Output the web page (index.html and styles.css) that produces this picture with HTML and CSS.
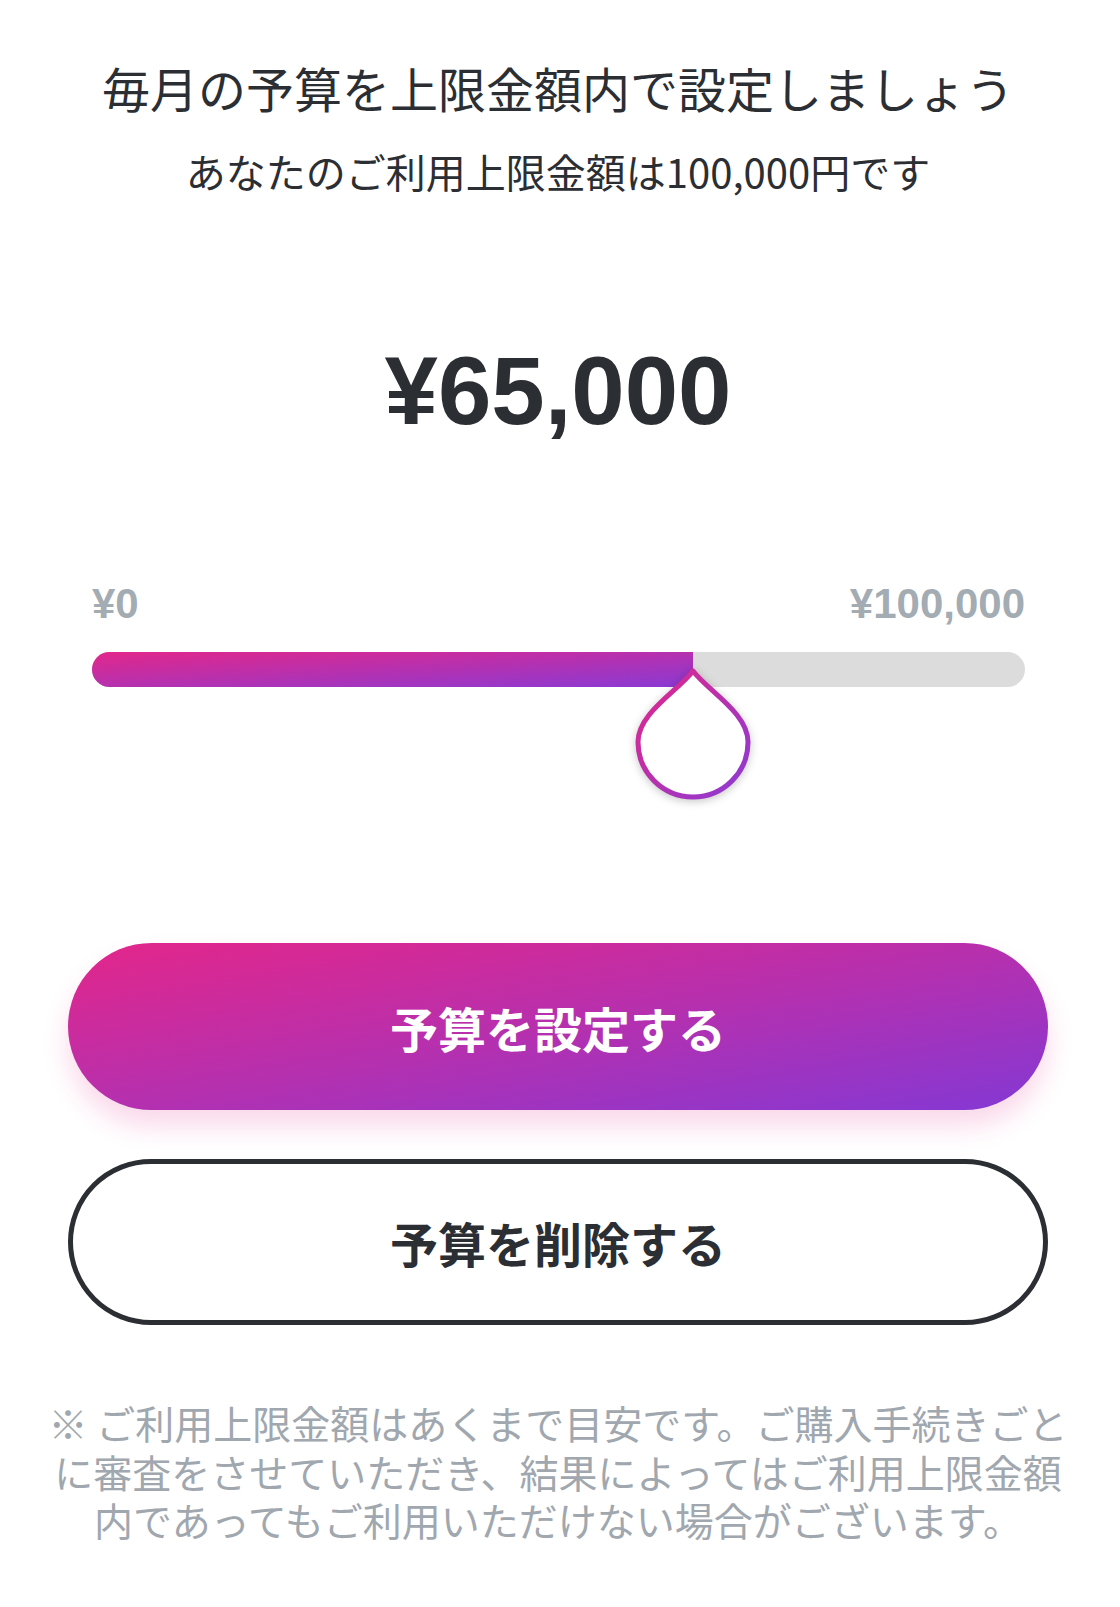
FILE: index.html
```html
<!DOCTYPE html>
<html lang="ja">
<head>
    <meta charset="UTF-8">
    <meta name="viewport" content="width=device-width, initial-scale=1.0">
    <title>予算設定</title>
    <link rel="stylesheet" href="styles.css">
</head>
<body>
    <div class="page">
        <h1 class="title">毎月の予算を上限金額内で設定しましょう</h1>
        <p class="subtitle">あなたのご利用上限金額は100,000円です</p>

        <div class="amount">¥65,000</div>

        <div class="range-labels">
            <span>¥0</span>
            <span>¥100,000</span>
        </div>

        <div class="slider">
            <div class="slider-fill" style="width: 64.4%;"></div>
            <!-- drop-shaped handle -->
            <svg class="slider-thumb" style="left: 64.4%;" width="126" height="140" viewBox="-63 -76 126 140">
                <defs>
                    <linearGradient id="thumbStroke" x1="0" y1="0" x2="1" y2="1">
                        <stop offset="0" stop-color="#e2278a"/>
                        <stop offset="1" stop-color="#8c3bd4"/>
                    </linearGradient>
                </defs>
                <path d="M0,-71 C15,-51 55,-29 55,0 A55,55 0 0 1 0,55 A55,55 0 0 1 -55,0 C-55,-29 -15,-51 0,-71 Z"
                      fill="#fff" stroke="url(#thumbStroke)" stroke-width="5" stroke-linejoin="round"/>
            </svg>
        </div>

        <button class="btn btn-primary">予算を設定する</button>
        <button class="btn btn-outline">予算を削除する</button>

        <p class="note">※ ご利用上限金額はあくまで目安です。ご購入手続きごと<br>に審査をさせていただき、結果によってはご利用上限金額<br>内であってもご利用いただけない場合がございます。</p>
    </div>
</body>
</html>
```

FILE: styles.css
```css
* { box-sizing: border-box; }
body {
    margin: 0;
    background: #fff;
    color: #2b2e33;
    font-family: "Noto Sans CJK JP", "Noto Sans", sans-serif;
}
.page {
    padding: 0 72px 40px 68px;
}
.title {
    margin: 53px 0 0;
    font-size: 48px;
    font-weight: 400;
    line-height: 68px;
    text-align: center;
    white-space: nowrap;
}
.subtitle {
    margin: 22px 0 0;
    font-size: 40px;
    line-height: 56px;
    text-align: center;
}
.amount {
    margin-top: 137px;
    font-family: "Liberation Sans", Arial, sans-serif;
    font-weight: bold;
    font-size: 96px;
    line-height: 110px;
    text-align: center;
}
.range-labels {
    display: flex;
    justify-content: space-between;
    margin: 134px 23px 0 24px;
    font-family: "Liberation Sans", Arial, sans-serif;
    font-weight: bold;
    font-size: 42px;
    line-height: 48px;
    color: #a3abb3;
}
.slider {
    position: relative;
    height: 35px;
    margin: 24px 23px 0 24px;
    background: #dcdcdc;
    border-radius: 18px;
}
.slider-fill {
    height: 100%;
    border-radius: 18px 0 0 18px;
    background: linear-gradient(to bottom right, #e2278a, #8a3ad4);
}
.slider-thumb {
    position: absolute;
    top: 14px;
    transform: translateX(-50%);
    filter: drop-shadow(0 2px 4px rgba(0,0,0,0.22));
}
.btn {
    display: block;
    width: 100%;
    height: 167px;
    border-radius: 84px;
    font-family: "Noto Sans CJK JP", sans-serif;
    font-size: 48px;
    font-weight: bold;
    cursor: pointer;
}
.btn-primary {
    margin-top: 256px;
    border: none;
    color: #fff;
    background: linear-gradient(to bottom right, #e3268a 0%, #b630ae 50%, #8438d4 100%);
    box-shadow: 0 16px 26px rgba(226,40,138,0.18);
}
.btn-outline {
    margin-top: 49px;
    height: 166px;
    border: 5px solid #2b2e33;
    background: #fff;
    color: #2b2e33;
}
.note {
    margin: 73px -50px 0;
    font-size: 39px;
    line-height: 48.5px;
    color: #a0a7ae;
    text-align: center;
    white-space: nowrap;
}
```
